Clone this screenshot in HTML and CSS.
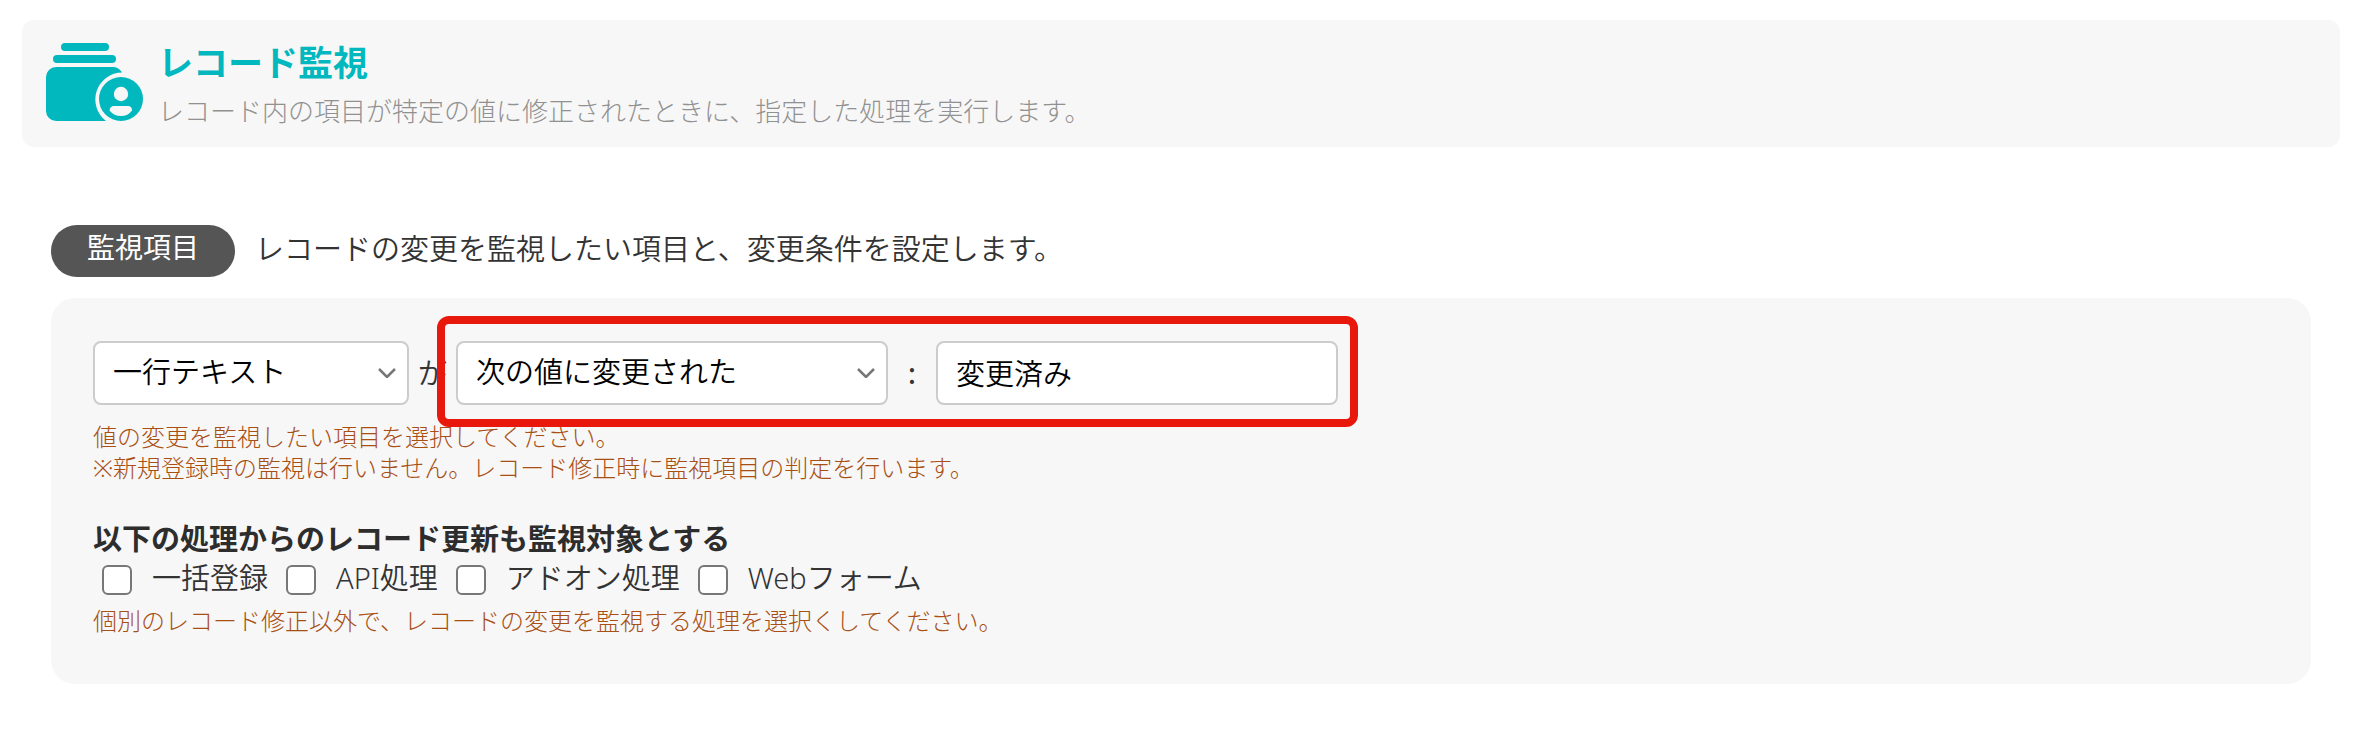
FILE: index.html
```
<!DOCTYPE html>
<html lang="ja">
<head>
<meta charset="utf-8">
<title>レコード監視</title>
<meta name="viewport" content="width=device-width, initial-scale=1">
<link rel="stylesheet" href="styles.css">
</head>
<body>
<header class="page-header">
  <svg class="page-icon" viewBox="0 0 97 78" aria-hidden="true">
    <rect x="15" y="0" width="48" height="8" rx="4"/>
    <rect x="7" y="12" width="63" height="8" rx="4"/>
    <path d="M10 24H66C71 24 74 26 76 29.500A27 27 0 0 0 60 78H10A10 10 0 0 1 0 68V34A10 10 0 0 1 10 24Z"/>
    <circle cx="75" cy="56" r="22"/>
    <circle class="cutout" cx="75" cy="51" r="7.200"/>
    <path class="cutout" d="M68 63H82Q86 63 86 67.500Q82 73 75 73Q68 73 63.500 67.500Q64 63 68 63Z"/>
  </svg>
  <div>
    <h1 class="page-title">レコード監視</h1>
    <p class="page-description">レコード内の項目が特定の値に修正されたときに、指定した処理を実行します。</p>
  </div>
</header>

<main class="content">
  <div class="section-head">
    <h2 class="badge">監視項目</h2>
    <p class="section-text">レコードの変更を監視したい項目と、変更条件を設定します。</p>
  </div>

  <form class="panel">
    <div class="condition">
      <div class="select-box field-select">
        <select class="control" aria-label="監視する項目"><option>一行テキスト</option></select>
        <svg class="chevron" viewBox="0 0 18 10" aria-hidden="true"><path d="M1 1L9 9L17 1"/></svg>
      </div>
      <span>が</span>
      <div class="highlight">
        <div class="select-box rule-select">
          <select class="control" aria-label="変更条件"><option>次の値に変更された</option></select>
          <svg class="chevron" viewBox="0 0 18 10" aria-hidden="true"><path d="M1 1L9 9L17 1"/></svg>
        </div>
        <span class="colon">:</span>
        <input class="control value-input" type="text" value="変更済み" aria-label="変更後の値">
      </div>
    </div>
    <p class="help">値の変更を監視したい項目を選択してください。<br>※新規登録時の監視は行いません。レコード修正時に監視項目の判定を行います。</p>

    <fieldset class="targets">
      <legend class="targets-title">以下の処理からのレコード更新も監視対象とする</legend>
      <div class="checks">
        <label class="check"><input type="checkbox">一括登録</label>
        <label class="check"><input type="checkbox">API処理</label>
        <label class="check"><input type="checkbox">アドオン処理</label>
        <label class="check"><input type="checkbox">Webフォーム</label>
      </div>
    </fieldset>
    <p class="help">個別のレコード修正以外で、レコードの変更を監視する処理を選択くしてください。</p>
  </form>
</main>
</body>
</html>
```
FILE: styles.css
```
* {
  box-sizing: border-box;
}

body {
  margin: 0;
  padding: 20px 25px 20px 22px;
  background: #fff;
  color: #333;
  font-family: "Noto Sans", "Noto Sans CJK JP", sans-serif;
  font-size: 29px;
  font-weight: 350;
  line-height: 40px;
}

h1, h2, p {
  margin: 0;
}

.page-header {
  display: flex;
  align-items: flex-start;
  gap: 15px;
  padding: 23px 24px 16px;
  border-radius: 12px;
  background: #f7f7f7;
}

.page-icon {
  flex: none;
  width: 97px;
  height: 78px;
  fill: #00b8be;
}

.page-icon .cutout {
  fill: #f7f7f7;
}

.page-title {
  color: #00b8be;
  font-size: 35px;
  font-weight: 700;
  line-height: 40px;
}

.page-description {
  margin-top: 8px;
  color: #919191;
  font-size: 26px;
  font-weight: 300;
  line-height: 40px;
}

.content {
  padding: 78px 29px 0;
}

.section-head {
  display: flex;
  align-items: center;
  gap: 20px;
}

.badge {
  padding: 2px 36px 10px;
  border-radius: 26px;
  background: #555;
  color: #fff;
  font-size: 28px;
  font-weight: 400;
  line-height: 40px;
}

.section-text {
  padding-bottom: 4px;
}

.panel {
  margin-top: 21px;
  padding: 43px 42px 48px;
  border-radius: 24px;
  background: #f7f7f7;
}

.condition {
  display: flex;
  align-items: center;
  gap: 9px;
  margin-bottom: 16px;
}

.highlight {
  position: relative;
  display: flex;
  align-items: center;
  gap: 20px;
}

.highlight::after {
  content: "";
  position: absolute;
  inset: -25px -20px -22px -19px;
  border: 8px solid #e8190c;
  border-radius: 12px;
  pointer-events: none;
}

.colon {
  font-weight: 500;
}

.select-box {
  display: grid;
  align-items: center;
}

.select-box > * {
  grid-area: 1 / 1;
}

.field-select {
  width: 316px;
}

.rule-select {
  width: 432px;
}

.value-input {
  width: 402px;
}

.control {
  height: 64px;
  padding: 0 18px 2px;
  border: 2px solid #ccc;
  border-radius: 8px;
  background: #fff;
  color: #000;
  font: inherit;
  appearance: none;
}

.chevron {
  justify-self: end;
  width: 18px;
  height: 10px;
  margin-right: 13px;
  fill: none;
  stroke: #777;
  stroke-width: 2.500;
  pointer-events: none;
}

.help {
  color: #a84f14;
  font-size: 24px;
  font-weight: 300;
  line-height: 31px;
}

.targets {
  margin: 36px 0 8px;
  padding: 0;
  border: 0;
}

.targets-title {
  padding: 0;
  color: #2d2d2d;
  font-weight: 700;
}

.checks {
  display: flex;
  flex-wrap: wrap;
  gap: 18px;
  padding-left: 9px;
}

.check {
  display: flex;
  align-items: center;
  gap: 20px;
  line-height: 38px;
}

.check input {
  width: 30px;
  height: 30px;
  margin: 4px 0 0;
  border: 2px solid #777;
  border-radius: 6px;
  background: #fff;
  appearance: none;
}
```
